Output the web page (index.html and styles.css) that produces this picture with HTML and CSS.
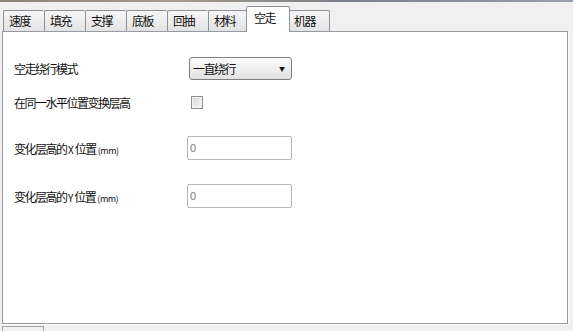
FILE: index.html
```html
<!DOCTYPE html>
<html lang="zh-CN">
<head>
<meta charset="utf-8">
<title>空走</title>
<link rel="stylesheet" href="styles.css">
</head>
<body>
<div class="topline"></div>
<div class="tabs">
  <div class="tab">速度</div>
  <div class="tab">填充</div>
  <div class="tab">支撑</div>
  <div class="tab">底板</div>
  <div class="tab">回抽</div>
  <div class="tab">材料</div>
  <div class="tab active">空走</div>
  <div class="tab">机器</div>
</div>
<div class="panel">
  <div class="row r1">
    <span class="label">空走绕行模式</span>
    <div class="select"><span>一直绕行</span><span class="arrow">▼</span></div>
  </div>
  <div class="row r2">
    <span class="label">在同一水平位置变换层高</span>
    <div class="checkbox"></div>
  </div>
  <div class="row r3">
    <span class="label">变化层高的<span class="latin">X</span>位置<span class="unit">(mm)</span></span>
    <div class="input">0</div>
  </div>
  <div class="row r4">
    <span class="label">变化层高的<span class="latin">Y</span>位置<span class="unit">(mm)</span></span>
    <div class="input">0</div>
  </div>
</div>
<div class="footer-tab"></div>
</body>
</html>
```
FILE: styles.css
```css
html, body {
  margin: 0;
  padding: 0;
}
body {
  width: 573px;
  height: 331px;
  overflow: hidden;
  background: #f0f0f0;
  font-family: "Noto Sans CJK SC", "Liberation Sans", sans-serif;
  font-size: 12px;
  color: #111;
}
.topline {
  height: 2px;
  background: linear-gradient(90deg, #8a8478 0%, #a59c8c 30%, #7b7f88 60%, #9b9fa8 100%);
}
.tabs {
  display: flex;
  align-items: flex-end;
  margin-top: 4px;
  padding-left: 3px;
  height: 25px;
  position: relative;
  z-index: 2;
}
.tab {
  box-sizing: border-box;
  width: 41px;
  height: 21px;
  border: 1px solid #8e9199;
  border-bottom: none;
  border-right: none;
  border-radius: 2px 2px 0 0;
  background: linear-gradient(#f6f6f6, #e3e3e3);
  padding-left: 5px;
  line-height: 20px;
  letter-spacing: -1.5px;
  font-size: 12px;
}
.tab:nth-child(8) {
  border-right: 1px solid #8e9199;
}
.tab.active {
  width: 44px;
  margin: 0 -1px -1px -3px;
  background: #fff;
  border-right: 1px solid #8e9199;
  padding-left: 7px;
  line-height: 22px;
  height: 26px;
  position: relative;
  z-index: 3;
}
.tab.active + .tab {
  border-left: none;
}
.panel {
  box-sizing: border-box;
  margin-left: 2px;
  width: 566px;
  height: 293px;
  background: #fff;
  border: 1px solid #969aa2;
  box-shadow: 1px 1px 0 #fdfdfd;
  padding: 24px 0 0 11px;
  position: relative;
  z-index: 1;
}
.row {
  display: flex;
  align-items: center;
  height: 24px;
}
.r2 { margin-top: 10px; }
.r3 { margin-top: 22px; }
.r4 { margin-top: 24px; }
.label {
  width: 175px;
  letter-spacing: -1.5px;
  font-size: 12px;
}
.latin {
  letter-spacing: 0;
  font-size: 10px;
  margin: 0 1px 0 1.5px;
}
.unit {
  font-size: 9px;
  letter-spacing: -0.5px;
  margin-left: 2px;
}
.select {
  box-sizing: border-box;
  width: 103px;
  height: 23px;
  border: 1px solid #7f7f7f;
  border-radius: 3px;
  background: linear-gradient(#fbfbfb, #e2e2e2);
  display: flex;
  align-items: center;
  justify-content: space-between;
  padding: 0 6px 0 3px;
  letter-spacing: -1.5px;
}
.arrow {
  font-size: 6px;
  letter-spacing: 0;
}
.checkbox {
  box-sizing: border-box;
  width: 12px;
  height: 13px;
  margin-left: 2px;
  border: 1px solid #8f8f8f;
  background: linear-gradient(135deg, #d8d8d8, #f6f6f6);
  box-shadow: inset 0 0 0 1px #f4f4f4;
}
.input {
  box-sizing: border-box;
  width: 105px;
  height: 24px;
  margin-left: -2px;
  border: 1px solid #b5b7bc;
  border-radius: 2px;
  padding-left: 2px;
  color: #777;
  font-family: "Liberation Sans", sans-serif;
  font-size: 11px;
  line-height: 22px;
}
.footer-tab {
  box-sizing: border-box;
  margin: 2px 0 0 2px;
  width: 42px;
  height: 8px;
  border: 1px solid #a4a4a4;
  border-bottom: none;
}
```
